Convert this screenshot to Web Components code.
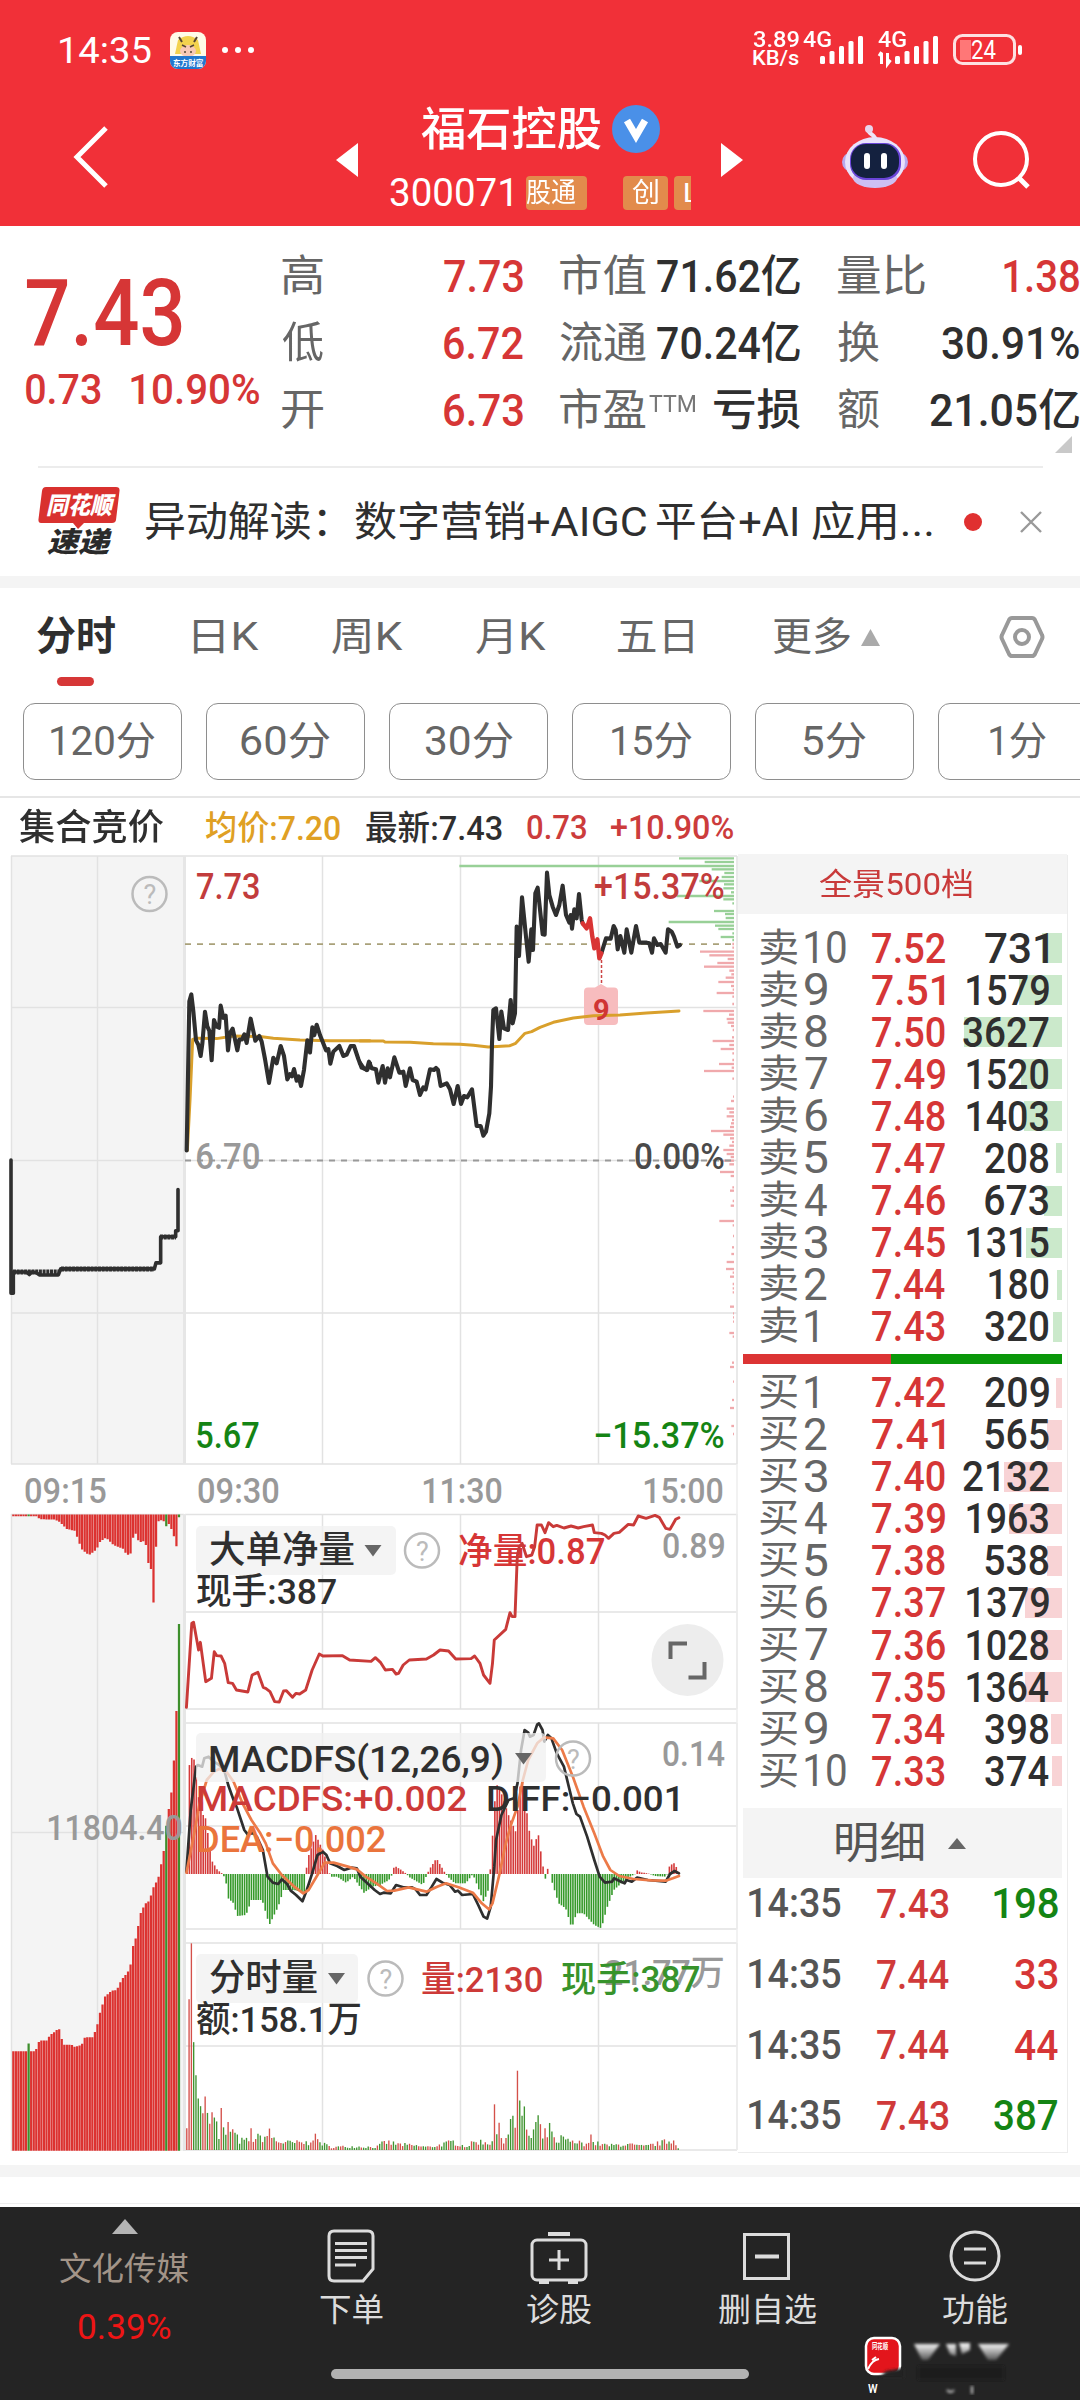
<!DOCTYPE html>
<html lang="zh-CN">
<head>
<meta charset="utf-8">
<title>福石控股 300071</title>
<style>
html,body{margin:0;padding:0;background:#fff}
body{width:1080px;height:2400px;overflow:hidden;font-family:Roboto,"Noto Sans CJK SC",sans-serif}
</style>
</head>
<body>
<stock-app></stock-app>
<script>
const FONT = 'Roboto,"Noto Sans CJK SC",sans-serif';
const RED = '#d63636', INK = '#2f2f2f', GREY = '#666', GREEN = '#148414', MUTE = '#999';
const pen = document.createElement('canvas').getContext('2d');

function ink(text, size, weight) {
  pen.font = `${weight} ${size}px ${FONT}`;
  const m = pen.measureText(text);
  return { l: -m.actualBoundingBoxLeft, w: m.actualBoundingBoxRight + m.actualBoundingBoxLeft };
}

/* A line of text whose glyphs fill exactly the width given in "w". */
class FitText extends HTMLElement {
  connectedCallback() {
    const s = +this.getAttribute('s') || 40, wt = this.getAttribute('wt') || 400;
    const w = +this.getAttribute('w'), t = this.textContent, m = ink(t, s, wt), k = w / m.w;
    this.attachShadow({ mode: 'open' }).innerHTML = `<style>
      :host{display:block;flex:none;width:${w}px;height:${s}px;font-size:${s}px;font-weight:${wt};line-height:${s}px;color:${this.getAttribute('c') || 'inherit'}}
      span{display:inline-block;white-space:pre;transform-origin:0 50%;transform:translateX(${-m.l * k}px) scaleX(${k})}
    </style><span><slot></slot></span>`;
  }
}
customElements.define('fit-text', FitText);

/* Row of [x1, x2, text, size, weight, colour] or [x1, x2, html] items, laid out by flex with the gaps between them. */
const row = (items, start = 0) => {
  let at = start;
  return items.map(([a, b, t, s, wt, c]) => {
    const m = a - at; at = b;
    return s ? `<fit-text style="margin-left:${m}px" w="${b - a}" s="${s}" wt="${wt}" c="${c}">${t}</fit-text>`
      : `<div class="cell" style="margin-left:${m}px;width:${b - a}px">${t}</div>`;
  }).join('');
};
const ROW = '.row{display:flex;align-items:center}.cell{flex:none;display:flex}svg{display:block;overflow:visible}';
const define = (name, css, html) => customElements.define(name, class extends HTMLElement {
  connectedCallback() {
    this.attachShadow({ mode: 'open' }).innerHTML = `<style>:host{display:block}${ROW}${css}</style>${typeof html === 'function' ? html(this) : html}`;
  }
});

/* SVG text with its ink between x1 and x2, centred on cy */
const tx = (x1, x2, cy, s, wt, c, t) => {
  const m = ink(t, s, wt), k = (x2 - x1) / m.w;
  return `<text transform="translate(${(x1 - m.l * k).toFixed(2)} ${(cy + .3555 * s).toFixed(2)}) scale(${k.toFixed(4)} 1)" font-size="${s}" font-weight="${wt}" fill="${c}">${t}</text>`;
};

/* ---------- status bar ---------- */
const bars = (w, n, x0 = 0) => Array.from({ length: n }, (_, i) => {
  const h = 8 + i * (20 / (n - 1)), x = x0 + i * (w - 5) / (n - 1);
  return `<rect x="${x}" y="${28 - h}" width="5" height="${h}" rx="1.5" fill="#fff"/>`;
}).join('');
define('status-bar', ':host{height:80px;color:#fff}.row{height:100px}.col{display:flex;flex-direction:column}', `
<div class="row">${row([
  [60, 151, '14:35', 37, 400, '#fff'],
  [170, 206, `<svg width="36" height="37"><defs><clipPath id="a"><rect width="36" height="37" rx="8"/></clipPath></defs><g clip-path="url(#a)"><rect width="36" height="37" fill="#fffbe8"/><path d="M8 8Q18 0 28 8L31 22H5Z" fill="#f3d24e"/><path d="M9 5l3 5M27 5l-3 5" stroke="#543" stroke-width="2"/><ellipse cx="18" cy="19" rx="8" ry="6" fill="#f8c9b6"/><path d="M12 13l4 2M24 13l-4 2M15 19v2M21 19v2" stroke="#543" stroke-width="1.5"/><rect y="24" width="36" height="13" fill="#2277cf"/></g><text x="3" y="33.500" font-size="7.600" font-weight="700" fill="#fff">东方财富</text></svg>`],
  [222, 254, '<svg width="32" height="6"><g fill="#fff"><circle cx="3" cy="3" r="3"/><circle cx="16" cy="3" r="3"/><circle cx="29" cy="3" r="3"/></g></svg>'],
  [753, 800, `<div class="col" style="margin-top:-4px;gap:-4px"><fit-text w="46" s="22.500" wt="500">3.89</fit-text><fit-text style="margin-top:-3px" w="46" s="20" wt="500">KB/s</fit-text></div>`],
  [803, 831, '<div style="padding-bottom:20px"><fit-text w="28" s="22" wt="500">4G</fit-text></div>'],
], 0)}<div style="margin-left:-11px"><svg width="43" height="28">${bars(43, 5)}</svg></div>
<div style="margin-left:15px;padding-bottom:20px"><fit-text w="28" s="22" wt="500">4G</fit-text></div>
<div style="margin-left:-28px"><svg width="60" height="28">${bars(43, 5, 17)}<path d="M3.500 28V17M1 20l2.500-4M9.500 17v11l3-4" stroke="#fff" stroke-width="3" fill="none"/></svg></div>
<div style="margin-left:15px"><svg width="70" height="32"><rect x="1.500" y="1.500" width="60" height="28" rx="8" fill="none" stroke="#fff" stroke-opacity=".85" stroke-width="3"/><path d="M7 6h11v20H7z" fill="#f77"/><rect x="65" y="11" width="4" height="10" rx="2" fill="#fff"/>${tx(19, 43, 16, 25, 400, '#fff', '24')}</svg></div>
</div>`);

/* ---------- title bar ---------- */
define('title-bar', `:host{height:146px;color:#fff}.bar{height:146px}.mid{width:363px;height:146px;box-sizing:border-box;display:flex;flex-direction:column;gap:23px;padding-top:25px}
.tags{display:flex;width:165px;overflow:hidden;margin-left:15px}.tag{flex:none;height:34px;border-radius:4px;background:#e28b4c;display:flex;align-items:center;overflow:hidden}`, `
<div class="row bar">
<svg style="margin-left:72px;margin-top:8px" width="38" height="62"><path d="M34 2L5 31 34 60" fill="none" stroke="#fff" stroke-width="5"/></svg>
<svg style="margin-left:226px;margin-top:14px" width="22" height="34"><path d="M22 0V34L0 17Z" fill="#fff"/></svg>
<div class="mid">
  <div class="row" style="height:48px">${row([[421, 601, '福石控股', 46, 500, '#fff'], [612, 660, '<svg width="48" height="48"><circle cx="24" cy="24" r="24" fill="#4a90e8"/><path d="M15 15.500L24 31 33 15.500" fill="none" stroke="#fff" stroke-width="7"/></svg>']], 358)}</div>
  <div class="row" style="height:34px"><fit-text style="margin-left:32px" w="121" s="39">300071</fit-text>
    <div class="tags"><div class="tag" style="width:61px"><fit-text w="50" s="27">股通</fit-text></div><div class="tag" style="width:45px;margin-left:36px"><fit-text style="margin-left:9px" w="26" s="27">创</fit-text></div><div class="tag" style="width:40px;margin-left:6px"><fit-text style="margin-left:11px" w="14" s="26">L</fit-text></div></div></div>
</div>
<svg style="margin-top:14px" width="23" height="34"><path d="M0 0V34L22 17Z" fill="#fff"/></svg>
<svg style="margin-left:97px;margin-top:8px" width="68" height="64"><path d="M34 16C36 8 24 10 29 3" fill="none" stroke="#efe3f6" stroke-width="4"/><circle cx="28" cy="4" r="4" fill="#e8d5ec"/><rect x="1" y="27" width="66" height="20" rx="10" fill="#b7a9ee"/><ellipse cx="34" cy="37" rx="30" ry="25" fill="#e9e2fb"/><ellipse cx="34" cy="53" rx="22" ry="10" fill="#cdbff2"/><rect x="9" y="18" width="51" height="37" rx="16" fill="#6a45d8"/><rect x="10" y="19" width="48" height="34" rx="15" fill="#14213f"/><path d="M26 31v10M43 31v10" stroke="#fff" stroke-width="6" stroke-linecap="round"/></svg>
<svg style="margin-left:63px;margin-top:12px" width="60" height="60"><circle cx="29" cy="30" r="26" fill="none" stroke="#fff" stroke-width="4"/><path d="M46 48L56 58" stroke="#fff" stroke-width="5"/></svg>
</div>`);

/* ---------- quote ---------- */
const B = 44;
define('quote-panel', ':host{height:240px;display:flex}.left{width:282px}.grid{width:798px;height:212px;padding-top:17px}.g{height:67px}', `
<div class="left"><div class="row" style="padding-top:42px">${row([[27, 182, '7.43', 92, 500, RED]])}</div>
<div class="row" style="padding-top:8px">${row([[26, 101, '0.73', 43, 500, RED], [131, 259, '10.90%', 43, 500, RED]])}</div></div>
<div class="grid">
<div class="row g">${row([[282, 323, '高', 43, 400, GREY], [444, 523, '7.73', B, 500, RED], [560, 646, '市值', 43, 400, GREY], [657, 800, '71.62亿', B, 500, INK], [838, 925, '量比', 43, 400, GREY], [1004, 1079, '1.38', B, 500, RED]], 282)}</div>
<div class="row g">${row([[282, 323, '低', 43, 400, GREY], [444, 523, '6.72', B, 500, RED], [560, 646, '流通', 43, 400, GREY], [657, 800, '70.24亿', B, 500, INK], [838, 879, '换', 43, 400, GREY], [942, 1079, '30.91%', B, 500, INK]], 282)}</div>
<div class="row g">${row([[282, 323, '开', 43, 400, GREY], [444, 523, '6.73', B, 500, RED], [560, 646, '市盈', 43, 400, GREY], [649, 695, '<div style="padding-bottom:13px"><fit-text w="46" s="24" c="#777">TTM</fit-text></div>'], [714, 800, '亏损', 43, 500, INK], [838, 879, '额', 43, 400, GREY], [930, 1079, '21.05亿', B, 500, INK]], 282)}</div>
<svg style="margin:-8px 0 0 773px" width="17" height="17"><path d="M17 0V17H0Z" fill="#c9c9c9"/></svg>
</div>`);

/* ---------- news ---------- */
define('news-line', ':host{height:110px;background:linear-gradient(#ececec,#ececec) 38px 0/1005px 2px no-repeat;border-bottom:12px solid #f4f4f4}.row{height:112px}', `
<div class="row">${row([
  [38, 120, `<svg width="82" height="70"><path d="M8 0H78Q82 0 81.500 4L78 33Q77.500 36 74 36H46L40 42 35 36H3Q0 36 .5 32L4 4Q4.500 0 8 0Z" fill="#d9312f"/><g font-style="italic">${tx(9, 74, 18, 24, 900, '#fff', '同花顺')}${tx(9, 71, 55, 28, 900, '#2a2a2a', '速递')}</g></svg>`],
  [146, 326, '异动解读：', 41, 400, INK], [355, 646, '数字营销+AIGC', 41, 400, INK], [657, 797, '平台+AI', 41, 400, INK], [812, 932, '应用...', 41, 400, INK],
  [964, 982, '<svg width="18" height="18"><circle cx="9" cy="9" r="9" fill="#e03030"/></svg>'],
  [1020, 1042, '<svg width="22" height="22"><path d="M1 1L21 21M21 1L1 21" stroke="#999" stroke-width="2.400"/></svg>'],
])}</div>`);

/* ---------- period tabs ---------- */
define('period-tabs', ':host{height:106px}.row{height:98px}.mark{width:37px;height:9px;border-radius:5px;background:#d63737;margin:-9px 0 0 57px}', `
<div class="row">${row([
  [37, 115, '分时', 40, 700, INK], [193, 211, '日', 39, 400, GREY].length && [193, 259, '日 K', 39, 400, GREY], [332, 403, '周 K', 39, 400, GREY], [476, 546, '月 K', 39, 400, GREY], [618, 693, '五日', 39, 400, GREY], [773, 850, '更多', 39, 400, GREY],
  [861, 880, '<svg width="19" height="17"><path d="M9.500 0L19 17H0Z" fill="#aaa"/></svg>'],
  [1000, 1044, '<svg width="44" height="44"><path d="M12 3H32Q34 3 35 5L42 20Q43 22 42 24L35 39Q34 41 32 41H12Q10 41 9 39L2 24Q1 22 2 20L9 5Q10 3 12 3Z" fill="none" stroke="#999" stroke-width="4"/><circle cx="22" cy="22" r="7" fill="none" stroke="#999" stroke-width="4"/></svg>'],
].map(i => (i[2] = i[2].replace(/^(.) K$/, '$1K'), i)))}</div><div class="mark"></div>`);

class MinutePill extends HTMLElement {
  connectedCallback() {
    this.attachShadow({ mode: 'open' }).innerHTML = `<style>:host{flex:none;box-sizing:border-box;width:159px;height:77px;padding-top:2px;border:1.500px solid #8e8e8e;border-radius:12px;display:flex;align-items:center;justify-content:center;color:${GREY}}</style><slot></slot>`;
  }
}
customElements.define('minute-pill', MinutePill);
define('minute-row', ':host{height:102px;border-bottom:2px solid #e6e6e6;overflow:hidden}.pills{display:flex;gap:24px;padding:8.500px 0 0 23px}', `
<div class="pills">${[['120分', 104], ['60分', 89], ['30分', 88], ['15分', 80], ['5分', 62], ['1分', 56]].map(([t, w]) => `<minute-pill><fit-text w="${w}" s="40">${t}</fit-text></minute-pill>`).join('')}</div>`);

define('info-line', ':host{height:57px}.row{height:59px}', `<div class="row">${row([
  [19, 164, '集合竞价', 36, 500, INK], [206, 340, '均价:7.20', 34, 500, '#dfa024'], [366, 502, '最新:7.43', 34, 500, INK], [527, 586, '0.73', 33, 500, '#cc3c3c'], [611, 733, '+10.90%', 33, 500, '#cc3c3c']])}</div>`);

/* ---------- charts ---------- */
const pl = (pts, c, w) => `<polyline points="${pts}" fill="none" stroke="${c}" stroke-width="${w}" vector-effect="non-scaling-stroke" stroke-linejoin="round" stroke-linecap="round"/>`;
const ln = (x1, y1, x2, y2, c = '#e2e2e2', w = 1.5, d = '') => `<path d="M${x1} ${y1}L${x2} ${y2}" stroke="${c}" stroke-width="${w}" fill="none"${d ? ` stroke-dasharray="${d}"` : ''}/>`;
const q = (x, y) => `<circle cx="${x}" cy="${y}" r="17" fill="none" stroke="#bbb" stroke-width="2.500"/>${tx(x - 6, x + 6, y + .5, 27, 400, '#bbb', '?')}`;
const btn = (x, y, w, h) => `<rect x="${x}" y="${y}" width="${w}" height="${h}" rx="5" fill="#f0f0f0" fill-opacity=".75"/>`;
const tri = (x, y) => `<path d="M${x} ${y}h17l-8.500 11.500z" fill="#666"/>`;
const parse = s => s.trim().split(/\s+/).map(p => p.split(',').map(Number));
const lerp = (pts, x) => {
  if (x <= pts[0][0]) return pts[0][1];
  for (let i = 1; i < pts.length; i++) if (x <= pts[i][0]) {
    const [a, b] = pts[i - 1], [c, d] = pts[i]; return b + (d - b) * (x - a) / (c - a || 1);
  }
  return pts[pts.length - 1][1];
};
let seed = 7; const rnd = () => (seed = (seed * 16807) % 2147483647) / 2147483647;

const PRICE_A = '560,716 568,372 574,356 580,395 588,462 595,472 602,498 607,470 615,396 622,430 628,440 635,508 642,415 649,430 657,433 662,382 670,410 677,405 684,485 690,445 698,435 712,485 718,460 726,460 733,448 740,468 752,412 766,463 778,452 785,465 795,505 807,560 820,502 830,515 842,475 852,498 862,552 870,540 876,545 882,528 890,555 896,545 903,567 912,530 922,462 930,490 937,432 943,450 950,426 960,450 968,465 978,485 985,482 991,516 1000,488 1018,475 1030,498 1040,495 1052,475 1062,475 1075,505 1085,525 1102,530 1110,515';
const PRICE_B = '0,669 10,683 20,690 27,665 35,685 48,688 55,728 68,678 75,728 83,685 90,712 103,652 118,698 130,695 137,738 150,685 158,720 170,725 180,765 190,742 197,748 210,688 222,690 228,684 234,690 242,738 260,730 270,748 281,792 293,738 303,792 312,768 322,772 336,748 350,858 362,858 370,887 378,875 388,820 393,740 396,610 400,510 408,505 418,597 424,515 432,565 444,570 452,480 458,550 465,520 470,260 477,348 486,172 493,240 498,290 506,365 514,268 519,330 526,160 533,143 548,283 554,284 561,98 568,165 578,200 588,225 598,195 608,137 618,225 628,248 632,225 636,266 643,208 650,235 657,162 665,240 668,250';
const PRICE_R = '668,250 680,265 685,250 690,235 697,290 703,325 712,298 718,355 724,340';
const PRICE_C = '724,340 738,295 752,296 761,258 767,270 773,328 781,288 793,338 800,268 814,338 828,258 838,308 860,308 868,310 876,338 882,295 892,315 902,312 917,338 924,268 935,275 942,290 952,320 960,315';
const AVG_A = '562,716 570,600 578,460 590,457 650,458 700,452 780,453 820,457 900,461 990,463 1110,463';
const AVG_B = '0,603 70,603 75,606 150,607 220,611 300,613 340,616 385,621 450,617 467,610 495,580 515,575 540,562 580,547 640,534 700,527 780,525 860,519 957,513';
const AUCTION = '33,738 33,1045 40,1045 40,996 80,996 88,1002 95,996 110,998 118,1003 175,1003 182,989 463,989 468,975 482,975 482,915 527,915 527,901 534,901 534,806';
const PROF_G = '55,957 66,1034 78,298 88,1055 99,1093 111,1085 123,1018 133,1092 145,1090 157,1113 168,950 178,1090 190,1117 213,1062 222,1095 234,1097 246,926 257,1065 267,1075 280,1117 291,1082 300,1117';
const PROF_R = '312,1117 323,1117 335,1020 346,1048 357,1103 369,1072 380,1032 392,1108 403,1114 413,1097 426,1075 438,1113 449,1118 459,1070 470,1117 492,1117 513,1030 524,1107 537,1100 548,1103 558,1113 570,1118 592,1116 603,1058 615,1108 627,1082 640,1117 660,1117 672,1077 683,1115 693,1032 716,1117 770,1119 783,1113 806,1100 817,1108 829,1100 840,1116 850,1113 861,1110 873,1053 884,1090 895,1110 906,1116 917,1108 930,1090 942,1100 951,1112 962,1090 973,1108 996,1080 1008,1112 1042,1117 1052,1110 1083,1118 1097,1112 1143,1078 1156,1118 1188,1119 1222,1116 1242,1114 1266,1100 1287,1098 1298,1118 1310,1110 1332,1118 1345,1118 1357,1118 1400,1110 1420,1119 1432,1119 1445,1119 1479,1108 1490,1118 1568,1116 1581,1110 1625,1119 1680,1116 1704,1110 1758,1114 1782,1119';
const profile = (s, c) => parse(s).map(([y, x]) => `<path d="M${x} ${y}H1122" stroke="${c}" stroke-width="7"/>`).join('');

const NET = '18,622 33,370 38,367 52,450 57,427 72,545 88,535 96,455 103,467 115,468 125,490 135,548 147,550 158,570 190,576 202,525 218,517 233,562 240,565 252,575 265,605 278,606 290,573 298,572 315,592 325,580 335,582 352,570 370,510 390,462 400,468 455,467 475,480 535,484 547,473 562,488 575,510 595,508 605,522 612,520 625,495 642,480 690,477 710,465 728,450 752,453 772,477 815,476 825,468 840,490 850,525 868,550 875,490 880,420 912,388 924,338 930,350 938,350 944,180 945,165 950,140 958,130 970,170 985,165 993,140 1000,75 1012,75 1022,98 1032,68 1045,80 1055,76 1075,84 1095,78 1115,84 1130,80 1155,75 1160,98 1180,100 1190,105 1200,115 1215,100 1230,97 1255,73 1270,75 1283,48 1305,55 1330,46 1342,52 1360,85 1372,88 1388,58 1397,53';
const DIFF = '18,515 30,330 45,200 50,195 62,200 68,175 80,170 95,185 110,195 125,215 135,255 150,300 160,325 180,390 190,404 205,398 215,410 232,450 245,530 260,548 275,552 285,538 300,552 310,572 325,585 343,604 355,570 370,520 385,465 400,455 410,465 420,490 440,498 460,510 480,503 495,505 505,530 530,555 545,570 560,582 570,578 590,580 605,555 625,562 650,562 660,568 672,585 690,585 705,560 718,537 735,548 755,555 770,575 778,572 790,585 820,582 835,615 850,650 860,656 870,620 880,500 885,420 900,345 920,300 935,295 945,250 955,150 965,90 975,98 980,110 990,105 1000,74 1005,70 1015,90 1020,125 1030,105 1040,115 1055,160 1075,200 1100,310 1110,342 1120,350 1140,410 1160,480 1175,530 1190,548 1210,545 1215,535 1235,545 1245,550 1250,540 1265,545 1280,533 1310,540 1360,545 1372,522 1385,513 1397,520';
const DEA = '18,518 40,400 55,310 75,240 95,215 110,207 130,215 150,245 175,310 200,360 225,400 240,430 260,490 285,525 320,560 345,580 360,570 385,525 405,488 430,488 470,500 495,508 520,530 550,550 580,573 600,572 640,562 690,575 720,560 745,550 780,562 820,578 845,610 865,628 875,610 895,520 910,440 925,380 945,320 960,240 975,180 1000,130 1020,112 1045,115 1070,150 1100,230 1130,320 1160,400 1185,470 1205,510 1230,528 1270,537 1320,541 1360,542 1380,535 1397,528';
const HIST = parse('20,515 25,200 37,160 48,250 55,320 62,345 70,345 78,400 88,480 105,510 120,522 128,540 135,595 150,610 160,648 185,645 200,600 230,600 250,675 275,620 290,570 320,570 350,580 353,522 356,480 380,405 400,450 415,500 419,522 420,530 440,530 465,548 485,530 515,578 540,560 560,555 585,540 595,522 600,497 620,510 635,522 640,530 680,555 692,522 700,505 718,475 740,515 750,530 770,550 800,550 820,522 850,605 862,575 868,520 875,410 885,250 900,280 920,345 940,395 955,230 965,260 975,380 990,440 1003,400 1015,490 1020,518 1022,545 1025,520 1030,505 1036,522 1040,540 1060,610 1080,625 1097,685 1110,640 1130,640 1160,675 1180,685 1195,625 1215,570 1235,550 1260,530 1275,522 1280,511 1290,517 1310,520 1330,528 1360,530 1365,522 1370,500 1382,488 1392,505 1397,518');
const VOL = parse('20,1285 26,857 32,727 38,1022 45,1130 51,1195 58,1220 64,1240 71,1185 77,1240 84,1275 90,1235 97,1255 103,1265 109,1305 115,1220 122,1285 128,1305 135,1270 150,1290 165,1318 192,1318 199,1290 205,1310 240,1305 248,1290 270,1320 300,1325 360,1325 370,1300 395,1325 420,1340 480,1338 550,1340 575,1322 610,1330 700,1340 765,1322 800,1338 830,1320 870,1325 874,1315 880,1203 886,1300 893,1280 900,1305 910,1315 925,1258 932,1247 938,1300 944,1098 950,1190 957,1250 964,1225 971,1285 985,1310 1000,1245 1015,1310 1033,1272 1050,1320 1065,1308 1100,1315 1141,1335 1148,1290 1155,1325 1200,1335 1250,1330 1300,1338 1385,1315 1397,1345');
const hist = () => { let o = ''; for (let x = 20; x < 1400; x += 6.43) { const y = lerp(HIST, x); o += `<path d="M${x.toFixed(1)} 522V${y.toFixed(1)}" stroke="${y < 522 ? '#d43a3a' : '#35992a'}" stroke-width="4.500"/>`; } return o; };
/* volume bars at these indexes are single peaks and keep their full height */
const PEAKS = [15, 134, 141, 142, 143, 144, 145, 146, 176];
const vol = () => { let o = '', i = 0; const G = [3, 4, 5, 6]; for (let x = 19; x < 1400; x += 6.43, i++) {
  let y = lerp(VOL, x); if (i > 13 && !PEAKS.includes(i)) y = 1350 - (1350 - y) * (.5 + rnd() * .7);
  const g = i < 3 || i === 8 || i === 15 || i === 134 || i === 144 ? 0 : G.includes(i) || rnd() > .45;
  o += `<path d="M${x.toFixed(1)} 1350V${Math.min(y, 1345).toFixed(1)}" stroke="${g ? '#3f9430' : '#d4504a'}" stroke-width="3.800"/>`; } return o; };
const AV = parse('40,1290 105,1290 110,1283 118,1265 140,1265 150,1252 160,1247 170,1240 184,1237 186,1275 215,1275 225,1280 245,1275 255,1257 278,1257 290,1235 300,1200 315,1162 335,1148 350,1147 365,1122 378,1110 390,1097 400,1040 410,1020 420,970 435,945 448,938 460,907 475,885 484,850 490,830 498,766 506,725 514,685 521,620 529,503 537,290');
const AT = parse('40,38 110,38 120,45 165,46 180,52 200,68 225,72 235,95 245,115 260,125 270,128 290,115 300,98 318,88 340,105 355,110 372,115 380,130 392,125 400,85 408,78 417,100 435,95 440,115 448,165 455,160 460,240 464,240 470,52 490,45 495,65 500,60 508,55 520,80 530,110 537,40');
const auctionBars = () => { let o = ''; for (let i = 0; i < 66; i++) { const x = 40 + i * 7.646, g = i === 6 || i === 60 || i === 65;
  o += `<path d="M${x.toFixed(1)} 1523V${(lerp(AV, x) - (i === 6 ? 18 : 0)).toFixed(1)}M${x.toFixed(1)} 34V${lerp(AT, x).toFixed(1)}" stroke="${g ? '#3d8f2c' : '#dc3230'}" stroke-width="6.700"/>`; } return o; };

define('stock-charts', 'text{font-family:Roboto,"Noto Sans CJK SC",sans-serif}', () => `
<svg width="738" height="1309" viewBox="0 855 738 1309">
<rect x="11" y="856" width="174" height="608" fill="#f4f4f4"/><rect x="11" y="1514" width="174" height="637" fill="#f4f4f4"/>
${[856, 1007.5, 1160.5, 1313, 1464].map(y => ln(11, y, 737, y)).join('')}
${[1514.5, 1612, 1709, 1723, 1826, 1929, 1943, 2046, 2150].map(y => ln(185, y, 737, y)).join('')}
${ln(11, 1832.5, 184, 1832.5)}${ln(11, 1514.5, 184, 1514.5)}
${[11.5, 97.500].map(x => ln(x, 856, x, 1464) + ln(x, 1514, x, 2151)).join('')}
${ln(184.500, 856, 184.500, 1464, '#e6e6e6', 3)}${ln(184.500, 1514, 184.500, 2151, '#e6e6e6', 3)}
${[322.5, 460.5, 598.500, 737].map(x => ln(x, 856, x, 1464) + ln(x, 1514, x, 1709) + ln(x, 1723, x, 1929) + ln(x, 1943, x, 2150)).join('')}
${ln(737, 1464, 737, 2150, '#eee')}
<g transform="translate(360 840) scale(.33333)">${profile(PROF_G, '#98d097')}${profile(PROF_R, '#f0a9ac')}</g>
${ln(185, 944.2, 737, 944.2, '#a9a17a', 1.8, '6 6')}${ln(185, 1160.500, 737, 1160.500, '#999', 1.8, '6 6')}
${tx(197, 259, 886, 36.500, 500, '#c23c3c', '7.73')}${tx(197, 259, 1156.500, 36.500, 500, MUTE, '6.70')}${tx(197, 259, 1435, 36.500, 500, GREEN, '5.67')}
${tx(595, 724, 886, 36.500, 500, '#c23c3c', '+15.37%')}${tx(635, 724, 1156.500, 36.500, 500, '#4a4a4a', '0.00%')}${tx(595, 724, 1435, 36.500, 500, GREEN, '−15.37%')}
${q(149.500, 894)}
<g transform="translate(0 840) scale(.33333 .43367)">${pl(AVG_A, '#d9a02c', 3)}${pl(PRICE_A, INK, 4.1)}${pl(AUCTION, INK, 3.6)}</g>
<path d="M13 1272H60M61 1269H154M160 1237H176" stroke="${INK}" stroke-width="5" stroke-dasharray="3 .7" fill="none"/>
<path d="M601 984l6 3.500h7q4 0 4 4V1021q0 4-4 4H588q-4 0-4-4V991.500q0-4 4-4h7z" fill="#f7bcbe"/>
<g transform="translate(360 840) scale(.33333)">${pl(AVG_B, '#d9a02c', 3)}${pl(PRICE_B, INK, 4.1)}${pl(PRICE_C, INK, 4.1)}${pl(PRICE_R, '#d93434', 4.4)}</g>
${ln(601.500, 960, 601.500, 984, '#c44', 1.5, '3 2')}${tx(594, 609, 1010, 29, 700, '#d03434', '9')}
${tx(25, 106, 1491, 35, 500, MUTE, '09:15')}${tx(198, 279, 1491, 35, 500, MUTE, '09:30')}${tx(423, 502, 1491, 35, 500, MUTE, '11:30')}${tx(644, 723, 1491, 35, 500, MUTE, '15:00')}
<g transform="translate(0 1500) scale(.33333 .42735)">${auctionBars()}</g>
${tx(48, 182, 1828, 35, 500, MUTE, '11804.40')}
${btn(196, 1526, 200, 49)}${tx(210, 354, 1550, 37, 500, INK, '大单净量')}${tri(364.500, 1545)}${q(422, 1550.500)}
${tx(459, 604, 1551, 36, 500, RED, '净量:0.87')}${tx(663, 724, 1546, 35, 500, MUTE, '0.89')}${tx(197, 336, 1591, 36, 500, INK, '现手:387')}
<g transform="translate(180 1500) scale(.35714 .33333)">${pl(NET, '#c93a38', 2.9)}</g>
<circle cx="687.500" cy="1660" r="36" fill="#ececec" fill-opacity=".95"/><path d="M670.500 1659V1643.500H687M704.500 1662V1677.500H688.500" fill="none" stroke="#666" stroke-width="4"/>
<g transform="translate(180 1700) scale(.35714 .33333)">${hist()}${pl(DIFF, INK, 2.7)}${pl(DEA, '#ec7a48', 2.7)}</g>
${btn(196, 1733, 350, 49)}${tx(210, 502, 1759, 37, 500, INK, 'MACDFS(12,26,9)')}${tri(515, 1753)}${q(573, 1758.500)}
${tx(663, 725, 1754, 35, 500, MUTE, '0.14')}
${tx(198, 467, 1798.500, 36, 500, '#cd3a38', 'MACDFS:+0.002')}${tx(488, 678, 1798.500, 36, 500, INK, 'DIFF:−0.001')}${tx(198, 386, 1839.500, 36, 500, '#ea743c', 'DEA:−0.002')}
<g transform="translate(180 1700) scale(.35714 .33333)">${vol()}</g>
${btn(196, 1954, 162, 49)}${tx(210, 317, 1978, 37, 500, INK, '分时量')}${tri(328, 1973)}${q(385.500, 1978.500)}
${tx(605, 723, 1973, 35, 500, MUTE, '21.77万')}${tx(422, 542, 1979, 36, 500, '#cd3a38', '量:2130')}${tx(562, 699, 1979, 36, 500, '#37932b', '现手:387')}
${tx(197, 360, 2019, 36, 500, INK, '额:158.1万')}
</svg>`);

/* ---------- order book ---------- */
define('book-row', ':host{flex:none}.row{height:42.080px}.bar{height:30px}', el => {
  const [n, p, v, side] = ['n', 'p', 'v', 'side'].map(a => el.getAttribute(a));
  const num = n.slice(1), bw = v * 98 / 3627, lw = num === '10' ? 41 : num === '1' ? 12 : 22;
  const vw = v.length * 21.9 - 2 - (v[0] === '1' ? 4 : 0);
  return `<div class="row">${row([[760, 797, n[0], 39, 400, GREY], [805, 805 + lw, num, 44, 400, GREY], [872, 945, p, 43, 500, RED]], 738)}
  <div class="bar" style="margin-left:${117 - bw}px;width:${bw}px;background:${side === 's' ? '#cbe9cb' : '#f8d3d5'}"></div>
  <fit-text style="margin-left:${-13 - vw}px" w="${vw}" s="43" wt="500" c="${INK}">${v}</fit-text></div>`;
});
define('trade-row', '.row{height:70.700px}', el => {
  const [p, v, c] = ['p', 'v', 'c'].map(a => el.getAttribute(a)), w = v.length * 21.3;
  return `<div class="row">${row([[749, 841, '14:35', 40, 500, '#555'], [877, 949, p, 41, 500, '#d03a3a'], [1058 - w, 1058, v, 42, 500, c]], 738)}</div>`;
});
const SELL = [731, 1579, 3627, 1520, 1403, 208, 673, 1315, 180, 320], BUY = [209, 565, 2132, 1963, 538, 1379, 1028, 1364, 398, 374];
define('order-book', ':host{width:330px;height:1298px;border:1.500px solid #ececec;border-left:0;border-top:0;box-sizing:border-box}.head{height:60px;background:#f4f4f4;display:flex;align-items:center;justify-content:center;margin-top:-1px;padding-right:14px}.ratio{display:flex;height:10px;margin:0 5px;background:#0a970a}.ratio i{width:147.500px;background:#dc3434}.detail{height:70px;background:#f4f4f4;margin:0 5px}', `
<div class="head"><fit-text w="153" s="31" c="#c93a3a">全景500档</fit-text></div>
<div style="height:440px;box-sizing:border-box;padding-top:13px">${SELL.map((v, i) => `<book-row side="s" n="卖${10 - i}" p="${(7.52 - i / 100).toFixed(2)}" v="${v}"></book-row>`).join('')}</div>
<div class="ratio"><i></i></div>
<div style="height:444px;box-sizing:border-box;padding-top:7.500px">${BUY.map((v, i) => `<book-row side="b" n="买${i + 1}" p="${(7.42 - i / 100).toFixed(2)}" v="${v}"></book-row>`).join('')}</div>
<div class="detail row">${row([[836, 923, '明细', 43, 400, '#555'], [948, 966, '<svg width="18" height="11"><path d="M9 0L18 11H0Z" fill="#666"/></svg>']], 743)}</div>
<div style="margin-top:-9px"><trade-row p="7.43" v="198" c="${GREEN}"></trade-row><trade-row p="7.44" v="33" c="${RED}"></trade-row><trade-row p="7.44" v="44" c="${RED}"></trade-row><trade-row p="7.43" v="387" c="${GREEN}"></trade-row></div>`);

/* ---------- bottom bar ---------- */
const navIcon = {
  doc: '<svg width="50" height="56"><path d="M8 3H42Q47 3 47 8V41L37 53H8Q3 53 3 48V8Q3 3 8 3Z"/><path d="M9 15.500H41M9 22.500H41M9 29.500H41M9 37H30"/></svg>',
  kit: '<svg width="58" height="56"><path d="M18 6H40" stroke-width="4"/><rect x="2" y="12" width="54" height="40" rx="5"/><path d="M29 22V42M19 32H39"/><path d="M9 54H19M38 54H48" stroke-width="4"/></svg>',
  minus: '<svg width="48" height="56"><rect x="1.500" y="6.500" width="44" height="44"/><path d="M12 28.500H36" stroke-width="4"/></svg>',
  more: '<svg width="54" height="56"><circle cx="27" cy="28" r="24"/><path d="M16 21H38M16 35H38"/></svg>',
};
define('nav-item', ':host{display:flex;flex-direction:column;align-items:center;gap:10px;flex:none}svg{fill:none;stroke:#dcdcdc;stroke-width:3}', el =>
  `${navIcon[el.getAttribute('icon')]}<fit-text w="${el.getAttribute('w')}" s="32" c="#dcdcdc">${el.getAttribute('t')}</fit-text>`);
define('bottom-bar', ':host{height:193px;background:#242424}.row{height:155px;align-items:flex-start}.sector{width:249px;display:flex;flex-direction:column;align-items:center;padding-top:12px;box-sizing:border-box}.items{display:flex;width:830px;padding-top:21px}.items nav-item{width:208px}.home{display:flex;height:38px}.pill{width:418px;height:10px;border-radius:5px;background:#b2b2b2;margin:7px 0 0 331px}', `
<div class="row"><div class="sector"><svg width="26" height="15"><path d="M13 0L26 15H0Z" fill="#b4b4b4"/></svg><fit-text style="margin-top:19px" w="129" s="32" c="#a29488">文化传媒</fit-text><fit-text style="margin-top:25px" w="93" s="35" c="#ee1515">0.39%</fit-text></div>
<div class="items"><nav-item style="margin-left:-2px" icon="doc" w="63" t="下单"></nav-item><nav-item icon="kit" w="64" t="诊股"></nav-item><nav-item icon="minus" w="97" t="删自选"></nav-item><nav-item icon="more" w="64" t="功能"></nav-item></div></div>
<div class="home"><div class="pill"></div>
<svg style="margin:-26px 0 0 115px" width="214" height="64"><defs><filter id="f"><feGaussianBlur stdDeviation="1.600"/></filter><linearGradient id="g" x2="0" y2="1"><stop stop-color="#fff"/><stop offset="1" stop-color="#555"/></linearGradient></defs>
<rect x="2" y="2" width="34" height="36" rx="8" fill="#e3151c" stroke="#fff" stroke-width="2.500"/><path d="M4 33Q8 24 15 23M8 24l4-3" stroke="#fff" stroke-width="2" fill="none"/>${tx(8, 24, 10, 8, 700, '#fff', '同花顺')}<path d="M15 42L22 35 40 32V42Z" fill="#242424" filter="url(#f)"/>
<path d="M50 8H76L64 24H58ZM82 8H92V20L86 18ZM95 7H106V14L98 18ZM114 8H145L132 24H124Z" fill="url(#g)" filter="url(#f)"/><path d="M54 30H140V44H54Z" fill="#1b1b1b" filter="url(#f)"/>
${tx(4, 14, 51, 17, 500, '#fff', 'w')}<path d="M83 54q4 4 7 0M108 50v8" stroke="#ccc" stroke-width="2" filter="url(#f)" fill="none"/></svg></div>`);

define('stock-app', ':host{width:1080px;height:2400px;background:#fff;overflow:hidden}.top{background:#f13038;height:226px}.body{display:flex;height:1310px}.band{height:12px;background:#f4f4f4}.gap{height:30px;background:linear-gradient(#eee,#eee) 0 26px/100% 1px no-repeat}', `
<div class="top"><status-bar></status-bar><title-bar></title-bar></div>
<quote-panel></quote-panel><news-line></news-line><period-tabs></period-tabs><minute-row></minute-row><info-line></info-line>
<div class="body"><stock-charts></stock-charts><order-book></order-book></div>
<div class="band"></div><div class="gap"></div><bottom-bar></bottom-bar>`);
</script>
</body>
</html>
